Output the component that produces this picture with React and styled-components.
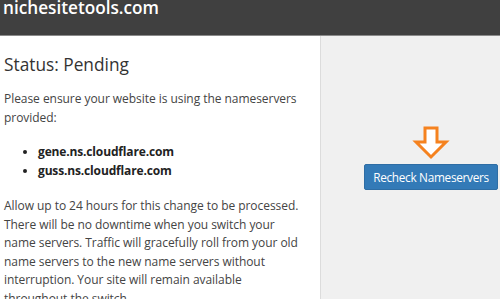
import React from "react";
import styled, { createGlobalStyle } from "styled-components";

const Global = createGlobalStyle`
  html, body { margin: 0; padding: 0; background: #fff; }
  body { font-family: "Open Sans", "Liberation Sans", sans-serif; color: #333; }
`;

const Page = styled.div`
  width: 500px;
  height: 299px;
  overflow: hidden;
  display: flex;
  flex-direction: column;
`;

const Header = styled.header`
  height: 35px;
  flex: none;
  background: #404040;
  border-bottom: 1px solid #8a8a8a;
  padding-left: 3px;
  overflow: hidden;
`;

const Brand = styled.h1`
  margin: 0;
  font-size: 17.2px;
  font-weight: 600;
  line-height: 15px;
  color: #fff;
`;

const Body = styled.div`
  flex: 1;
  display: flex;
  min-height: 0;
`;

const Main = styled.section`
  width: 320px;
  flex: none;
  padding: 17px 12px 0 4px;
  box-sizing: border-box;
`;

const Title = styled.h2`
  margin: 0 0 13px;
  font-size: 17.3px;
  font-weight: 400;
  line-height: 24px;
  color: #333;
`;

const Text = styled.p`
  margin: 0 0 ${(p) => p.$gap || 0}px;
  font-size: 12px;
  letter-spacing: -0.05px;
  line-height: 18.5px;
  color: #444;
`;

const List = styled.ul`
  margin: 0 0 17px;
  padding-left: 34px;
  font-size: 12px;
  letter-spacing: -0.15px;
  line-height: 18.5px;
  font-weight: 700;
  color: #222;
`;

const Side = styled.aside`
  flex: 1;
  background: #f0f0f0;
  border-left: 1px solid #dcdcdc;
  display: flex;
  flex-direction: column;
  align-items: flex-end;
  padding: 90px 2px 0 0;
`;

const Action = styled.div`
  display: flex;
  flex-direction: column;
  align-items: center;
  gap: 4px;
`;

const Button = styled.button`
  width: 134px;
  height: 26px;
  border: 1px solid #2e6da4;
  border-radius: 2px;
  background: #337ab7;
  color: #fff;
  font-family: "Open Sans", "Liberation Sans", sans-serif;
  font-size: 11.8px;
  letter-spacing: -0.3px;
  padding: 0;
  cursor: pointer;
`;

const Arrow = () => (
  <svg width="38" height="34" viewBox="0 0 38 34">
    <path
      d="M13 2 H25 V16 H34 L19 31 L4 16 H13 Z"
      fill="#fff"
      stroke="#f5821f"
      strokeWidth="3"
      strokeLinejoin="miter"
    />
  </svg>
);

export default function App() {
  return (
    <Page>
      <Global />
      <Header>
        <Brand>nichesitetools.com</Brand>
      </Header>
      <Body>
        <Main>
          <Title>Status: Pending</Title>
          <Text $gap={16}>
            Please ensure your website is using the nameservers provided:
          </Text>
          <List>
            <li>gene.ns.cloudflare.com</li>
            <li>guss.ns.cloudflare.com</li>
          </List>
          <Text>
            Allow up to 24 hours for this change to be processed.
            <br />
            There will be no downtime when you switch your
            <br />
            name servers. Traffic will gracefully roll from your old
            <br />
            name servers to the new name servers without
            <br />
            interruption. Your site will remain available
            <br />
            throughout the switch.
          </Text>
        </Main>
        <Side>
          <Action>
            <Arrow />
            <Button>Recheck Nameservers</Button>
          </Action>
        </Side>
      </Body>
    </Page>
  );
}
